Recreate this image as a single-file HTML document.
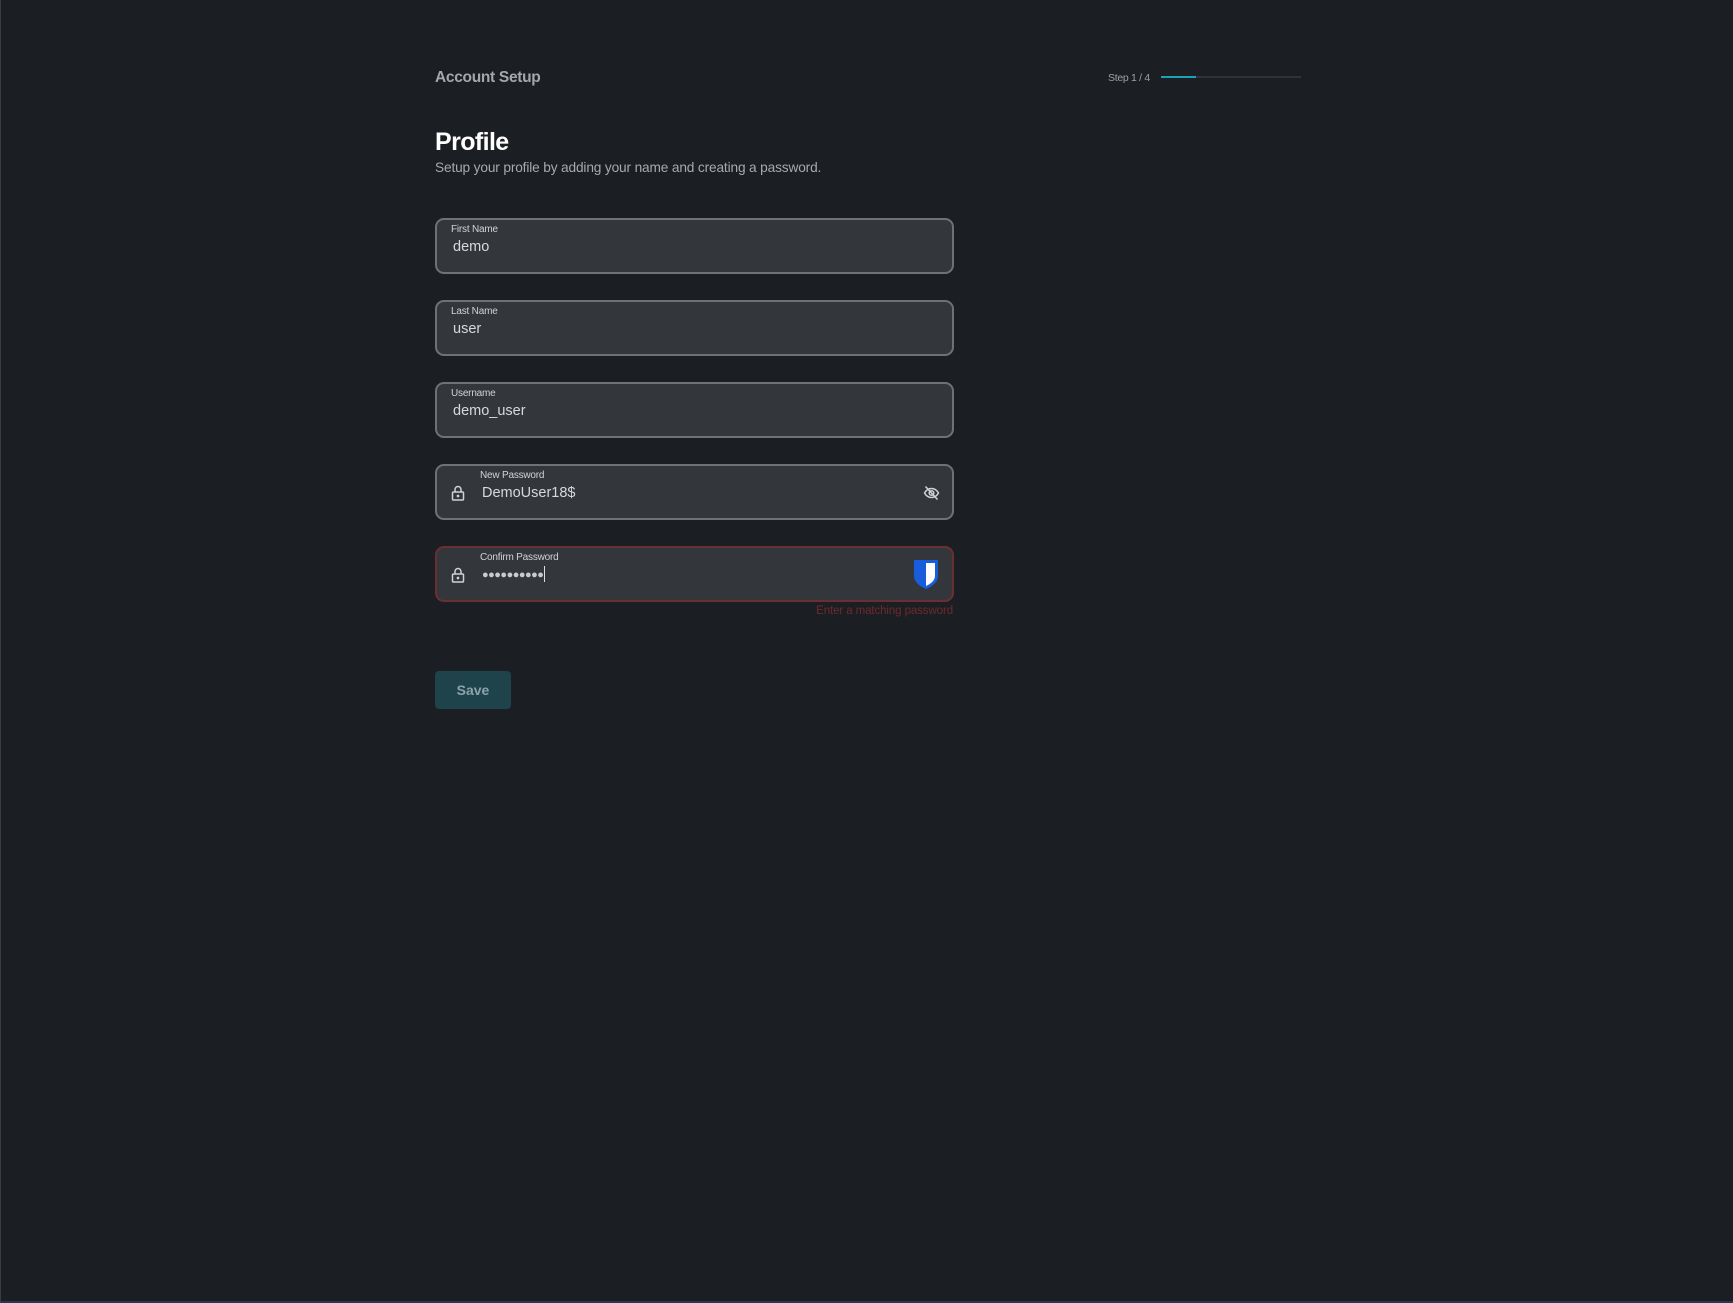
<!DOCTYPE html>
<html><head><style>
*{margin:0;padding:0;box-sizing:border-box}
body{width:1733px;height:1303px;background:#1b1e22;font-family:"Liberation Sans",sans-serif;position:relative;overflow:hidden;border-left:1px solid #3a3d42}
.a{position:absolute;white-space:nowrap}
.box{position:absolute;left:434px;width:519px;height:56px;background:#33373b;border:2px solid #6f7275;border-radius:9px}
.lab{position:absolute;font-size:10px;color:#d0d3d6;top:4px;letter-spacing:-0.2px}
.val{position:absolute;font-size:14.5px;color:#d6d9dc;top:19px}
</style></head><body>
<div class="a" style="left:434px;top:69px;font-size:15.5px;font-weight:bold;color:#a4a8ac;letter-spacing:-0.3px">Account Setup</div>
<div class="a" style="left:1107px;top:72px;font-size:10.5px;color:#9da1a5;letter-spacing:-0.3px">Step 1 / 4</div>
<div class="a" style="left:1160px;top:76px;width:140px;height:2px;background:#2f3236"></div>
<div class="a" style="left:1160px;top:76px;width:35px;height:2px;background:#1ba2b8"></div>
<div class="a" style="left:434px;top:128px;font-size:25px;font-weight:bold;color:#fff;letter-spacing:-0.6px">Profile</div>
<div class="a" style="left:434px;top:160px;font-size:13.7px;color:#a6aaae;letter-spacing:-0.15px">Setup your profile by adding your name and creating a password.</div>

<div class="box" style="top:218px"><div class="lab" style="left:14px">First Name</div><div class="val" style="left:16px">demo</div></div>
<div class="box" style="top:300px"><div class="lab" style="left:14px">Last Name</div><div class="val" style="left:16px">user</div></div>
<div class="box" style="top:382px"><div class="lab" style="left:14px">Username</div><div class="val" style="left:16px">demo_user</div></div>
<div class="box" style="top:464px">
<svg style="position:absolute;left:14px;top:19px" width="14" height="16" viewBox="0 0 14 16" fill="none" stroke="#d0d3d6" stroke-width="1.5"><rect x="1.5" y="7" width="11" height="8" rx="1"/><path d="M4 7V4.5a3 3 0 0 1 6 0V7"/><circle cx="7" cy="11" r=".6" fill="#d0d3d6"/></svg>
<div class="lab" style="left:43px">New Password</div><div class="val" style="left:45px">DemoUser18$</div>
<svg style="position:absolute;left:486px;top:19px" width="17" height="16" viewBox="0 0 17 16" fill="none" stroke="#d0d3d6" stroke-width="1.5"><path d="M1.5 8C3.5 4.5 6 3.5 8.5 3.5S13.5 4.5 15.5 8C13.5 11.5 11 12.5 8.5 12.5S3.5 11.5 1.5 8Z"/><circle cx="8.5" cy="8" r="2.3"/><path d="M2.5 1.5L14.5 14.5"/></svg>
</div>
<div class="box" style="top:546px;border-color:#6b2f32">
<svg style="position:absolute;left:14px;top:19px" width="14" height="16" viewBox="0 0 14 16" fill="none" stroke="#d0d3d6" stroke-width="1.5"><rect x="1.5" y="7" width="11" height="8" rx="1"/><path d="M4 7V4.5a3 3 0 0 1 6 0V7"/><circle cx="7" cy="11" r=".6" fill="#d0d3d6"/></svg>
<div class="lab" style="left:43px">Confirm Password</div>
<div class="val" style="left:45px;top:18px;letter-spacing:-0.5px;font-size:11px;color:#c8ccd0">●●●●●●●●●●<span style="display:inline-block;width:1px;height:16px;background:#ddd;vertical-align:-4px;margin-left:1px"></span></div>
<svg style="position:absolute;left:476px;top:11px" width="26" height="31" viewBox="0 0 26 31"><path d="M1 1H25V17C25 23 19 27.5 13 30C7 27.5 1 23 1 17Z" fill="#175ddc"/><path d="M13 4H22V17C22 21.5 17.5 25 13 27Z" fill="#fff"/></svg>
</div>
<div class="a" style="right:780px;top:605px;font-size:11.5px;color:#6e2a2e;letter-spacing:-0.1px">Enter a matching password</div>
<div class="a" style="left:434px;top:671px;width:76px;height:38px;background:#1e434a;border-radius:4px;color:#8aa3a8;font-weight:bold;font-size:14px;text-align:center;line-height:38px">Save</div>
<div class="a" style="left:0;top:1301px;width:1733px;height:2px;background:#2a3550"></div>
</body></html>
